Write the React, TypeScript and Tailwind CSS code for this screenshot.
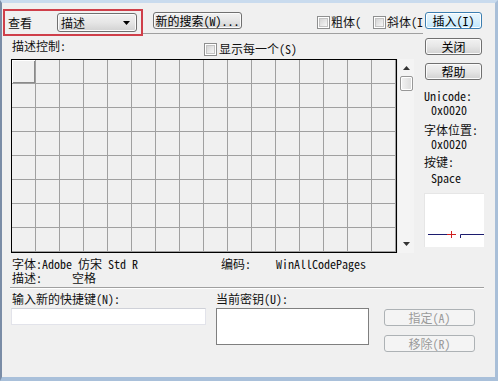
import React from "react";

const FONT = { fontFamily: '"Noto Sans Mono CJK SC", "Noto Sans CJK SC", "Liberation Mono", monospace' };

function Btn({ children, w, focus, disabled, className = "" }: { children: React.ReactNode; w: string; focus?: boolean; disabled?: boolean; className?: string }) {
  const base = "h-[17px] flex items-center justify-center rounded-[3px] text-[12px] leading-none ";
  const style = disabled
    ? "border border-[#adb2b5] bg-[#f4f4f4] text-[#9a9a9a]"
    : focus
    ? "border border-[#3c7fb1] bg-gradient-to-b from-[#eaf6fd] via-[#d9f0fc] to-[#bee6fd] text-black shadow-[inset_0_0_0_1px_#ffffff]"
    : "border border-[#707070] bg-gradient-to-b from-[#f2f2f2] via-[#e6e6e6] to-[#d2d2d2] text-black shadow-[inset_0_0_0_1px_#fbfbfb]";
  return <div className={base + style + " " + w + " " + className}>{children}</div>;
}

function Check({ className = "" }: { className?: string }) {
  return (
    <div className={"w-[13px] h-[13px] border border-[#8e8f8f] bg-white p-[1px] shrink-0 " + className}>
      <div className="w-full h-full bg-gradient-to-br from-[#d4d4d4] to-[#f7f7f7] border border-[#c3c3c3]" />
    </div>
  );
}

export default function App() {
  const cells = Array.from({ length: 128 }, (_, i) => i);
  return (
    <div
      className="w-[498px] h-[381px] overflow-hidden bg-[#f0f0f0] border-l-2 border-l-[#7a8ca6] border-r-[3px] border-r-[#a9bfd8] border-b-[4px] border-b-[#a9c0da] border-t-[3px] border-t-[#c9dbee] flex flex-col text-[12px] text-[#111]"
      style={FONT}
    >
      {/* top section */}
      <div className="flex items-start mt-[6px]">
        {/* left column */}
        <div className="ml-[1px] w-[411px] flex flex-col">
          {/* Row A */}
          <div className="flex items-start h-[27px]">
            <div className="w-[140px] h-[27px] border-2 border-[#cf3f4a] flex items-center shrink-0">
              <span className="ml-[3px] leading-[14px] whitespace-nowrap">查看</span>
              <div className="ml-[25px] w-[80px] h-[19px] rounded-[3px] border border-[#707070] bg-gradient-to-b from-[#f2f2f2] via-[#e6e6e6] to-[#d2d2d2] shadow-[inset_0_0_0_1px_#fbfbfb] flex items-center">
                <span className="ml-[3px] leading-[14px]">描述</span>
                <svg className="ml-auto mr-[6px]" width="7" height="4" viewBox="0 0 7 4">
                  <path d="M0 0 H7 L3.5 4 Z" fill="#000" />
                </svg>
              </div>
            </div>
            <div className="flex-1 h-[25px] border-b border-b-[#a0a0a0] flex items-start">
              <Btn w="w-[89px]" className="ml-[10px] mt-[3px]">新的搜索(W)...</Btn>
              <div className="ml-[75px] mt-[6px] flex items-center w-[56px]">
                <Check />
                <span className="ml-[1px] leading-[14px] whitespace-nowrap">粗体(</span>
              </div>
              <div className="mt-[6px] flex items-center">
                <Check />
                <span className="ml-[1px] leading-[14px] whitespace-nowrap w-[36px] overflow-hidden">斜体(I</span>
              </div>
            </div>
          </div>
          {/* Row B */}
          <div className="flex items-start h-[23px]">
            <span className="ml-[9px] mt-[3px] leading-[14px] whitespace-nowrap">描述控制:</span>
            <div className="ml-auto mr-[117px] mt-[6px] flex items-center">
              <Check />
              <span className="ml-[2px] leading-[14px] whitespace-nowrap">显示每一个(S)</span>
            </div>
          </div>
          {/* Row C: grid + scrollbar */}
          <div className="flex ml-[8px]">
            <div className="border border-black bg-[#a0a0a0] w-[386px] h-[194px] pr-px pb-px">
              <div className="grid grid-cols-[repeat(16,23px)] grid-rows-[repeat(8,23px)] gap-px">
                {cells.map((i) => (
                  <div
                    key={i}
                    className={
                      i === 0
                        ? "bg-[#f0f0f0] shadow-[inset_1px_1px_0_#ffffff,inset_-1px_-1px_0_#8a8a8a]"
                        : "bg-[#f0f0f0]"
                    }
                  />
                ))}
              </div>
            </div>
            <div className="w-[17px] h-[194px] bg-[#f4f4f4] border-l border-l-[#e8e8e8] flex flex-col items-center">
              <svg className="mt-[7px]" width="7" height="4" viewBox="0 0 7 4">
                <path d="M0 4 H7 L3.5 0 Z" fill="#333" />
              </svg>
              <div className="mt-[6px] w-[13px] h-[15px] rounded-[2px] border border-[#979797] bg-gradient-to-r from-[#f3f3f3] to-[#dcdcdc] shadow-[inset_0_0_0_1px_#ffffff]" />
              <svg className="mt-auto mb-[7px]" width="7" height="4" viewBox="0 0 7 4">
                <path d="M0 0 H7 L3.5 4 Z" fill="#333" />
              </svg>
            </div>
          </div>
        </div>

        {/* right column */}
        <div className="ml-[11px] w-[58px] flex flex-col">
          <Btn w="w-[57px]" focus className="mt-[3px]">插入(I)</Btn>
          <Btn w="w-[57px]" className="mt-[9px]">关闭</Btn>
          <Btn w="w-[57px]" className="mt-[8px]">帮助</Btn>
          <span className="-ml-px mt-[9px] leading-[14px]">Unicode:</span>
          <span className="ml-[6px] leading-[14px]">0x0020</span>
          <span className="-ml-px mt-[6px] leading-[14px]">字体位置:</span>
          <span className="ml-[6px] leading-[14px]">0x0020</span>
          <span className="-ml-px mt-[4px] leading-[14px]">按键:</span>
          <span className="ml-[6px] mt-[2px] leading-[14px]">Space</span>
          <div className="-ml-px mt-[8px] w-[60px] h-[54px] bg-white border-l border-t border-[#e6e6e6]">
            <svg width="60" height="54" viewBox="0 0 60 54">
              <path d="M3 40.5 H24" stroke="#1c1c6e" strokeWidth="1" />
              <path d="M22 40.5 H31 M26.5 37 V44" stroke="#d02020" strokeWidth="1" />
              <path d="M35.5 44 V40.5 H59" stroke="#1c1c6e" strokeWidth="1" fill="none" />
            </svg>
          </div>
        </div>
      </div>

      {/* info rows */}
      <div className="flex mt-[4px] ml-[10px] leading-[14px] whitespace-nowrap">
        <span className="w-[209px]">字体:Adobe 仿宋 Std R</span>
        <span className="w-[55px]">编码:</span>
        <span>WinAllCodePages</span>
      </div>
      <div className="flex ml-[10px] leading-[14px] whitespace-nowrap">
        <span className="w-[60px]">描述:</span>
        <span>空格</span>
      </div>
      <div className="ml-[8px] mt-[2px] w-[474px] h-[2px] border-t border-t-[#a0a0a0] border-b border-b-white" />

      {/* shortcut section */}
      <div className="flex mt-[3px] ml-[9px] items-start">
        <div className="flex flex-col w-[195px]">
          <span className="ml-px leading-[14px] whitespace-nowrap">输入新的快捷键(N):</span>
          <div className="mt-[2px] h-[17px] bg-white border border-[#e2e3ea] border-t-[#cfd1d8]" />
        </div>
        <div className="flex flex-col w-[153px] ml-[10px]">
          <span className="leading-[14px] whitespace-nowrap">当前密钥(U):</span>
          <div className="mt-[2px] h-[37px] bg-white border border-[#7f7f7f]" />
        </div>
        <div className="flex flex-col ml-[15px] mt-[17px]">
          <Btn w="w-[91px]" disabled>指定(A)</Btn>
          <Btn w="w-[91px]" disabled className="mt-[9px]">移除(R)</Btn>
        </div>
      </div>
    </div>
  );
}
